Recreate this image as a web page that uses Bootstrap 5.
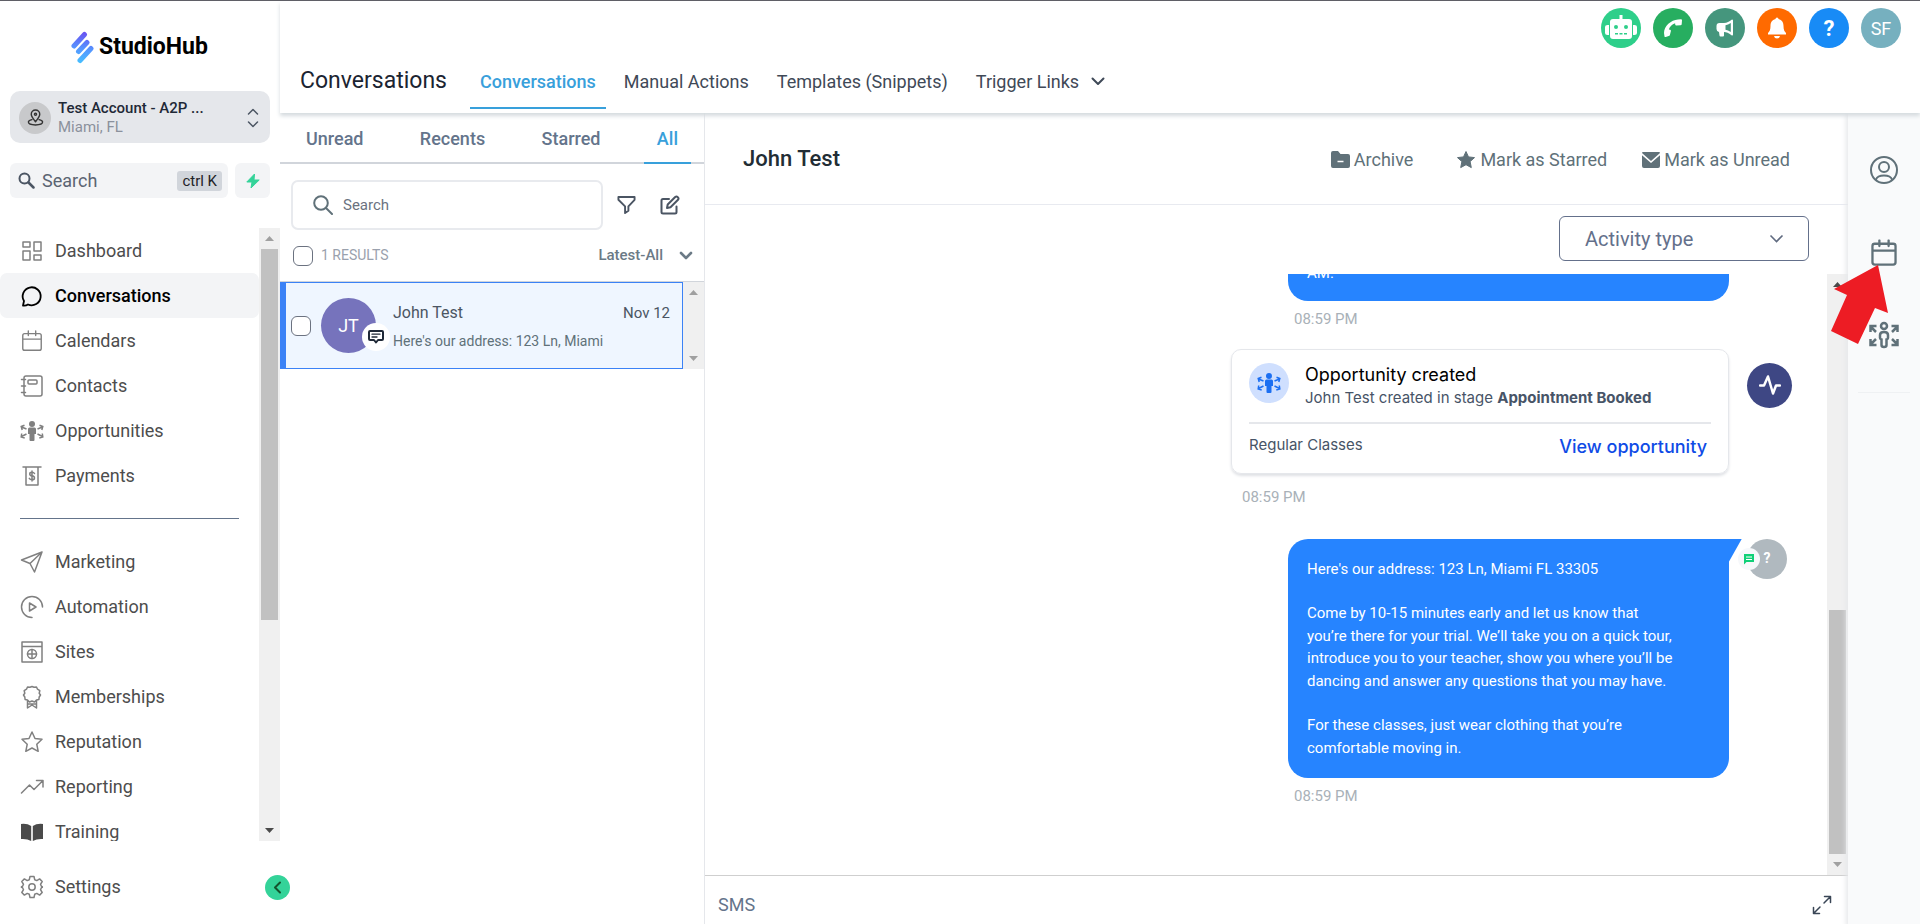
<!DOCTYPE html>
<html lang="en">
<head>
<meta charset="utf-8">
<meta name="viewport" content="width=device-width, initial-scale=1">
<title>StudioHub – Conversations</title>
<link href="https://cdn.jsdelivr.net/npm/bootstrap@5.3.0/dist/css/bootstrap.min.css" rel="stylesheet">
<style>
body{font-family:Roboto,"Liberation Sans",sans-serif;font-size:15px;color:#4b5563;background:#fff;border-top:1px solid #5f5f66}
button{color:inherit}
a{text-decoration:none}
svg{display:block;flex:none}
.ico{fill:none;stroke:currentColor;stroke-width:2;stroke-linecap:round;stroke-linejoin:round}
.thin{stroke-width:1.5}
.fs-18{font-size:18px}.fs-22{font-size:22px}.fs-14{font-size:14px}
.slate{color:#607179}
.plain{border:0;background:none;padding:0}
.round{border-radius:50%;display:flex;align-items:center;justify-content:center;flex:none;border:0;padding:0;color:#fff}

.side{width:280px;flex:none}
.brand-row{height:90px;padding:2px 0 0 71px;gap:5px}
.brand-name{font-size:23px;font-weight:700;color:#000;line-height:28px}
.account{margin:0 10px;height:52px;border-radius:10px;background:#e5e7eb;padding:1px 10px 0 9px;gap:7px;line-height:19px}
.account .round{width:32px;height:32px;background:#c8c9cb;color:#333}
.account-name{color:#1f2937;font-weight:500}
.account-place{color:#8b919c}
.quick{margin:20px 10px 30px;gap:7px}
.quick label{height:35px;background:#f3f4f6;border-radius:6px;padding:0 6px 0 8px;gap:7px;min-width:0}
.quick input,.inbox-search input{border:0;outline:0;background:none;min-width:0;padding:0;color:#4b5563}
.quick input::placeholder{color:#5b6472;opacity:1}
.keys{font:inherit;font-size:15px;background:#d1d5db;border-radius:3px;color:#1f2328;line-height:20px;padding:0 5px;flex:none}
.bolt{width:35px;height:35px;border-radius:6px;background:#f3f4f6;display:flex;align-items:center;justify-content:center;flex:none}

.menu{overflow:hidden;min-height:0}
.menu-item{height:45px;padding-left:20px;gap:11px;color:#4d4d4d;font-size:18px;flex:none;border-radius:7px}
.menu-item svg{color:#808080}
.menu-item.active{background:#f3f4f6;color:#000;font-weight:500}
.menu-item.active svg{color:#000}
.menu-rule{margin:20px 20px;border:0;border-top:1px solid #64748b;opacity:1;flex:none}
.track{width:21px;flex:none;background:#f0f0f0;display:flex;flex-direction:column;align-items:center}
.track svg{height:21px;width:9px}
.thumb{width:17px;background:#c1c1c1}
.footer-row{height:84px;padding-top:23px}
.collapse-btn{width:25px;height:25px;background:#34d399;color:#14532d;position:absolute;right:-10px;top:34px;z-index:5}

.topbar{height:112px;flex:none;box-shadow:0 3px 4px #d5dbdf;position:relative;z-index:2;background:#fff;padding:0 19px 0 20px}
.page-title{color:#1b2431;font-size:23px;font-weight:400;line-height:30px;margin:0 23px 0 0;padding-bottom:17px}
.tab{display:flex;align-items:center;gap:12px;padding:0 10px 3px;font-size:18px;color:#3f4957;height:50px;border-bottom:2px solid transparent}
.tab.active{color:#38a0db;border-color:#38a0db;font-weight:500}
.bubbles{gap:12px;padding-top:7px}
.bubbles .round{width:40px;height:40px}

.inbox{width:425px;flex:none;border-right:1px solid #e5e7eb}
.filters{height:51px;padding:0 13px;border-bottom:2px solid #d1d5db}
.filters button{padding:1px 13px 0;font-size:18px;font-weight:500;color:#64748b;height:51px;border-bottom:2px solid transparent}
.filters button.active{color:#38a0db;border-color:#38a0db}
.inbox-tools{padding:16px 24px 0 11px}
.inbox-search{height:50px;border:2px solid #e8eaee;border-radius:7px;padding:0 20px;gap:10px;margin-right:14px}
.inbox-search input::placeholder{color:#6b7280;opacity:1}
.inbox-meta{height:51px;padding:0 11px 0 13px}
.tick{appearance:none;width:20px;height:20px;border:1px solid #6b7280;border-radius:6px;background:#fff;margin:0;flex:none}
.sorter{color:#6b7a86;font-weight:500}
.thread-list{border-top:1px solid #d1d5db}
.thread{height:87px;background:#eff6ff;border:1px solid #3b82f6;border-left-width:6px;padding:0 12px 0 5px}
.avatar-jt{width:55px;height:55px;background:#7673bc;font-size:18px;position:relative;margin:0 17px 0 10px}
.chan{position:absolute;width:28px;height:28px;right:-14px;bottom:2px;background:#fff;color:#1f2937}
.thread-text{line-height:20px;padding-top:2px}

.chat-head{height:92px;border-bottom:1px solid #e8eaf0;padding:2px 58px 0 38px;flex:none}
.chat-actions{gap:35px}
.activity{width:250px;height:45px;border:1px solid #64708b;border-radius:6px;padding:0 24px 0 25px;font-size:20px;color:#64708b;
 appearance:none;background:#fff url("data:image/svg+xml,%3Csvg xmlns='http://www.w3.org/2000/svg' width='15' height='10' fill='none' stroke='%23606b80' stroke-width='1.6'%3E%3Cpath d='M1.500 1.500l6 6 6-6'/%3E%3C/svg%3E") no-repeat right 24px center}
.chat-filter{padding:11px 39px 13px;flex:none}
.stream{overflow:hidden;min-height:0;display:flex;flex-direction:column;justify-content:flex-end;align-items:flex-end;padding:0 35px 69px 0}
.entry{flex:none;display:flex;gap:18px;width:561px;justify-content:flex-end}
.entry-mark{width:45px;flex:none}
.bubble{width:441px;background:#2684ff;color:#fff;border-radius:20px;padding:19px;line-height:1.5;position:relative}
.bubble p{margin:0 0 22px;max-width:370px}
.bubble p:last-child{margin:0}
.tailed{border-top-right-radius:0}
.tail{position:absolute;left:100%;top:0;width:13px;height:23px;background:#2684ff;clip-path:polygon(0 0,100% 0,0 100%)}
.stamp{color:#a9b1b8;line-height:20px;flex:none}
.stamp-msg{width:498px;padding:8px 0 0 0}
.stamp-note{width:550px;padding:13px 0 32px}
.note{width:498px;border:1px solid #e5e7eb;border-radius:10px;box-shadow:0 2px 3px #dfe1e5;font-family:Inter,"Liberation Sans",sans-serif;padding:13px 17px;height:125px}
.note-icon{width:40px;height:40px;background:#cfdffe;color:#1b6ff2}
.note-title{color:#000;font-size:18px;line-height:24px}
.note-sub{font-size:15px;line-height:22px;color:#475467}
.note hr{margin:13px 0 10px;border:0;border-top:2px solid #e5e7eb;opacity:1}
.note a{color:#0f4be6;font-size:18px;font-weight:500;line-height:26px}
.pulse{width:45px;height:45px;background:#3e4784;margin-top:14px}
.who{width:40px;height:40px;background:#b0b9bf;font-weight:700;font-size:14px;position:relative}
.who .round{position:absolute;left:-9px;top:9px;width:22px;height:22px;background:#f6f8fb}
.composer{border-top:1px solid #cfcfcf;height:50px;padding:8px 16px 0 13px;flex:none;color:#64748b}

.rail{width:72px;flex:none;background:#f9fafb;box-shadow:0 0 5px 2px #e6e7ea;z-index:1;padding-top:42px;position:relative;color:#607179}
.rail button{margin-bottom:53px}
.rail hr{width:52px;margin:-10px 0 0;border-color:#d5d8dc}
.pointer{position:absolute;left:-17px;top:152px}
</style>
</head>
<body class="vh-100 d-flex overflow-hidden">

<svg class="d-none">
 <symbol id="people" viewBox="0 0 24 20"><circle cx="12" cy="3" r="3" fill="currentColor"/><path fill="currentColor" d="M8 8q0-1.500 1.500-1.500h5q1.500 0 1.500 1.500v5h-1.500v6q0 1-1 1h-3q-1 0-1-1v-6H8z"/><path fill="none" stroke="currentColor" stroke-width="1.500" d="M6.500 8 1.500 6M4.500 4.200 1.200 5.500l1 3.500M6.500 13l-5 2.500M1.700 12.500 1.200 16l3.500 1M17.500 8l5-2M19.500 4.200l3.300 1.300-1 3.500M17.500 13l5 2.500M22.300 12.500l.5 3.500-3.500 1"/></symbol>
 <symbol id="cal" viewBox="0 0 24 24"><path d="M4 4h16q2 0 2 2v14q0 2-2 2H4q-2 0-2-2V6q0-2 2-2zM2 10h20M8 1v5M16 1v5"/></symbol>
 <symbol id="up" viewBox="0 0 9 21"><path d="M0 13 4.500 8 9 13z"/></symbol>
 <symbol id="down" viewBox="0 0 9 21"><path d="M0 8 4.500 13 9 8z"/></symbol>
</svg>

<aside class="side d-flex flex-column vh-100">
 <div class="brand-row d-flex align-items-center flex-shrink-0">
  <svg width="23" height="33" viewBox="0 0 23 33" fill="none" stroke-linecap="round" stroke-width="5"><defs><linearGradient id="lg" gradientUnits="userSpaceOnUse" x1="14" y1="0" x2="10" y2="33"><stop stop-color="#6a4cf0"/><stop offset=".55" stop-color="#5596ff"/><stop offset="1" stop-color="#45c2ff"/></linearGradient></defs><path stroke="url(#lg)" d="M13.500 3.500 3 15M16 11.500 7.500 20.500M20 17.500 9 29.500"/></svg>
  <span class="brand-name">StudioHub</span>
 </div>
 <button class="plain account d-flex align-items-center text-start flex-shrink-0">
  <span class="round"><svg class="ico" width="17" height="17" viewBox="0 0 24 24"><path d="M12 18C8 13 6 10.500 6 7.500a6 6 0 0 1 12 0C18 10.500 16 13 12 18zM7 15c-3 .5-5 1.600-5 3.500C2 21 7 22.500 12 22.500S22 21 22 18.500c0-1.900-2-3-5-3.500"/><circle cx="12" cy="7.500" r="1.500"/></svg></span>
  <span class="flex-grow-1"><span class="d-block account-name">Test Account - A2P ...</span><span class="d-block account-place">Miami, FL</span></span>
  <svg class="ico thin" width="14" height="20" viewBox="0 0 14 20"><path d="M2.500 6 7 1.500 11.500 6M2.500 14 7 18.500 11.500 14"/></svg>
 </button>
 <div class="quick d-flex">
  <label class="d-flex align-items-center flex-grow-1 fs-18">
   <svg class="ico" width="17" height="17" viewBox="0 0 17 17"><circle cx="6.500" cy="6.500" r="5"/><path stroke-width="2.500" d="m10.500 10.500 5 5"/></svg>
   <input class="flex-grow-1 w-50" placeholder="Search" aria-label="Search">
   <kbd class="keys">ctrl K</kbd>
  </label>
  <button class="plain bolt" aria-label="Quick actions"><svg width="14" height="16" viewBox="0 0 14 16"><path fill="#34d399" stroke="#34d399" stroke-linejoin="round" d="M8.500 1 .8 9H6l-1 6L13.200 7H8z"/></svg></button>
 </div>

 <div class="d-flex flex-grow-1 menu">
  <nav class="menu d-flex flex-column flex-grow-1" aria-label="Main">
   <a href="#" class="menu-item d-flex align-items-center"><svg class="ico thin" width="24" height="24" viewBox="0 0 24 24"><path d="M3 3h7v5H3zM14 3h7v9h-7zM3 12h7v9H3zM14 16h7v5h-7z"/></svg>Dashboard</a>
   <a href="#" class="menu-item active d-flex align-items-center"><svg class="ico" width="24" height="24" viewBox="0 0 24 24"><path stroke-width="1.800" d="M3 21.500l1-4.500A9 9 0 1 1 8 20.500C6.500 21.500 4.500 21.700 3 21.500z"/></svg>Conversations</a>
   <a href="#" class="menu-item d-flex align-items-center"><svg class="ico thin" width="24" height="24" viewBox="-1 -1 26 26"><use href="#cal" width="24" height="24"/></svg>Calendars</a>
   <a href="#" class="menu-item d-flex align-items-center"><svg class="ico thin" width="24" height="24" viewBox="0 0 24 24"><path d="M6 2h14q2 0 2 2v16q0 2-2 2H6q-2 0-2-2V4q0-2 2-2zM1.500 5.500h4M1.500 12h4M1.500 18.500h4M9 6h7q1 0 1 1v2q0 1-1 1H9q-1 0-1-1V7q0-1 1-1z"/></svg>Contacts</a>
   <a href="#" class="menu-item d-flex align-items-center"><svg width="24" height="20"><use href="#people"/></svg>Opportunities</a>
   <a href="#" class="menu-item d-flex align-items-center"><svg class="ico thin" width="24" height="24" viewBox="0 0 24 24"><path d="M3 3h18M6 3v18h12V3M14.500 9.500c-.5-1-1.500-1.300-2.500-1.300-3 0-3 3.300 0 3.600 3.300.4 3.300 4 0 4-1.200 0-2.200-.5-2.700-1.400M12 7v10"/></svg>Payments</a>
   <hr class="menu-rule">
   <a href="#" class="menu-item d-flex align-items-center"><svg class="ico thin" width="24" height="24" viewBox="0 0 24 24"><path d="M22 2 1.500 10 10 13.500 14.500 22zM22 2 10 13.500"/></svg>Marketing</a>
   <a href="#" class="menu-item d-flex align-items-center"><svg class="ico thin" width="24" height="24" viewBox="0 0 24 24"><path d="M12 22.500A10.500 10.500 0 1 1 22.500 12M9.500 8l6.500 4-6.500 4z"/></svg>Automation</a>
   <a href="#" class="menu-item d-flex align-items-center"><svg class="ico thin" width="24" height="24" viewBox="0 0 24 24"><path d="M2 2h20v20H2zM2 6.500h20"/><circle cx="12" cy="14" r="4.500"/><path d="M12 9.500v9M7.500 14h9"/></svg>Sites</a>
   <a href="#" class="menu-item d-flex align-items-center"><svg class="ico thin" width="24" height="24" viewBox="0 0 24 24"><path d="M12 1.500l2 .8 2.500-.3 1 2.200 2.300 1.500-.6 2.500L20.500 10l-1.300 2-.3 2.500-2.400.4L14.500 17 12 16l-2.500 1-2-2.100-2.400-.4-.3-2.500L3.500 10l1.300-1.800-.6-2.500 2.300-1.500 1-2.200 2.500.3zM7.500 15.500V23l4.500-3 4.500 3v-7.500M8 19h8"/></svg>Memberships</a>
   <a href="#" class="menu-item d-flex align-items-center"><svg class="ico thin" width="24" height="24" viewBox="0 0 24 24"><path d="m12 2 3 6.500 7 .8-5.200 5 1.400 7L12 18l-6.200 3.300 1.400-7-5.200-5 7-.8z"/></svg>Reputation</a>
   <a href="#" class="menu-item d-flex align-items-center"><svg class="ico thin" width="24" height="24" viewBox="0 0 24 24"><path d="m1.500 18 8-8 4.500 4.500 9-9M16.500 5.500H23V12"/></svg>Reporting</a>
   <a href="#" class="menu-item d-flex align-items-center"><svg width="24" height="24" viewBox="0 0 24 24" fill="#4a4a4a"><path d="M1 4q6-.8 10.200 2v15Q7 18.500 1 19zM23 4q-6-.8-10.200 2v15Q17 18.500 23 19z"/></svg>Training</a>
  </nav>
  <div class="track"><svg fill="#a0a0a0"><use href="#up"/></svg><div class="thumb" style="height:371px"></div><svg class="mt-auto" fill="#4a4a4a"><use href="#down"/></svg></div>
 </div>
 <div class="footer-row position-relative flex-shrink-0">
  <a href="#" class="menu-item d-flex align-items-center"><svg class="ico thin" width="24" height="24" viewBox="0 0 24 24"><path d="M10 1.500h4l.7 3.200 2.100.9 2.800-1.700 2.600 2.600-1.700 2.800.9 2 .9.300v.8l-.9.300-.9 2 1.700 2.800-2.600 2.600-2.800-1.700-2.100.9-.7 3.200h-4l-.7-3.200-2.100-.9-2.800 1.700-2.600-2.600 1.700-2.800-.9-2-1.100-.3v-.8l1.100-.3.9-2-1.700-2.800L4.400 3.900l2.800 1.700 2.100-.9z"/><circle cx="12" cy="12" r="3.200"/></svg>Settings</a>
  <button class="round collapse-btn" aria-label="Collapse"><svg class="ico" width="9" height="13" viewBox="0 0 9 13"><path d="M7 1.500 2 6.500l5 5"/></svg></button>
 </div>
</aside>

<div class="flex-grow-1 d-flex flex-column vh-100" style="min-width:0">
 <header class="topbar d-flex justify-content-between">
  <div class="d-flex align-items-end">
   <h1 class="page-title">Conversations</h1>
   <nav class="d-flex gap-2 pb-1" aria-label="Conversations">
    <a href="#" class="tab active">Conversations</a><a href="#" class="tab">Manual Actions</a><a href="#" class="tab">Templates (Snippets)</a><a href="#" class="tab">Trigger Links <svg class="ico" width="14" height="9" viewBox="0 0 14 9"><path d="m1.500 1.500 5.500 5.500 5.500-5.500"/></svg></a>
   </nav>
  </div>
  <div class="bubbles d-flex">
   <button class="round" style="background:#2ecf8a" aria-label="Assistant"><svg width="34" height="28" viewBox="0 0 34 28"><path fill="#fff" d="M15.500 1h3v4H25q3 0 3 3v14q0 3-3 3H9q-3 0-3-3V8q0-3 3-3h6.500zM1 13q0-2 2.500-2H5v10H3.500Q1 21 1 19zM33 13q0-2-2.500-2H29v10h1.500q2.500 0 2.500-2z"/><g fill="#2ecf8a"><circle cx="12" cy="13" r="2"/><circle cx="22" cy="13" r="2"/><path d="M11 19h3v1.500h-3zM15.500 19h3v1.500h-3zM20 19h3v1.500h-3z"/></g></svg></button>
   <button class="round" style="background:#27ae60" aria-label="Phone"><svg width="20" height="20" viewBox="0 0 20 20"><path fill="#fff" d="M1.500 18.500 1 15C1 8 8 2 15 1.500l3-.2q1 0 1 1l-.3 4q-.1 1-1.200 1l-4.200.2q-1 0-1.100-1l-.1-1.200C9 6.500 6.700 8.700 5.800 11.500l1.400.3q.9.200.7 1.200l-1 4q-.3 1-1.200 1.100l-3 .9q-1 .2-1.200-.5z"/></svg></button>
   <button class="round" style="background:#45967d" aria-label="Announcements"><svg width="20" height="20" viewBox="0 0 20 20"><path fill="#fff" d="M17 1.500q1 0 1 1v14q0 1.500-1.500.8C13.500 15 11.500 14 9 14v3.500q0 1-1 1H5.500q-1 0-1-1L4 14q-2.500-.3-2.500-3V8q0-3 3-3H9c3 0 5-1.500 8-3.500z"/><path fill="#45967d" d="M10.500 7.200Q13 6.700 15.800 5v9q-2.800-1.700-5.300-2.200z"/></svg></button>
   <button class="round" style="background:#ff6a00" aria-label="Notifications"><svg width="20" height="22" viewBox="0 0 20 22"><path fill="#fff" d="M10 .5q1.500 0 1.500 1.500c3.500.8 5 3.500 5 7 0 4 1 5.500 2.500 7v1.500H1V16c1.500-1.500 2.500-3 2.500-7 0-3.500 1.500-6.200 5-7Q8.500.5 10 .5zM7 19h6q-.5 2.500-3 2.500T7 19z"/></svg></button>
   <button class="round fs-22 fw-bold" style="background:#188bf6" aria-label="Help">?</button>
   <button class="round fs-18" style="background:#76b0bf">SF</button>
  </div>
 </header>

 <div class="d-flex flex-grow-1" style="min-height:0">
  <section class="inbox d-flex flex-column">
   <div class="filters d-flex justify-content-between"><button class="plain">Unread</button><button class="plain">Recents</button><button class="plain">Starred</button><button class="plain active">All</button></div>
   <div class="inbox-tools d-flex align-items-center">
    <label class="inbox-search d-flex align-items-center flex-grow-1"><svg class="ico slate" width="20" height="20" viewBox="0 0 20 20"><circle cx="8" cy="8" r="6.800"/><path d="m13 13 6 6"/></svg><input class="flex-grow-1" placeholder="Search" aria-label="Search conversations"></label>
    <button class="plain me-4" aria-label="Filter"><svg class="ico" width="19" height="20" viewBox="0 0 20 20"><path d="M1.500 1.500h17v3L12 11.500V16l-3.500 2.500v-7l-7-7z"/></svg></button>
    <button class="plain" aria-label="Compose"><svg class="ico" width="20" height="20" viewBox="0 0 20 20"><path d="M9 4H3Q1.500 4 1.500 5.500V17q0 1.500 1.500 1.500h12q1.500 0 1.500-1.500v-5.500M7 13l.7-3.500 7.500-7.500q1.300-1 2.600.2t.2 2.600L10.500 12.300z"/></svg></button>
   </div>
   <div class="inbox-meta d-flex align-items-center">
    <input type="checkbox" class="tick" id="all"><label for="all" class="fs-14 ms-2" style="color:#9aa1ad">1 RESULTS</label>
    <button class="plain ms-auto d-flex align-items-center gap-3 sorter">Latest-All <svg class="ico" width="14" height="9" viewBox="0 0 14 9" style="stroke-width:2.600"><path d="m2 2 5 5 5-5"/></svg></button>
   </div>
   <div class="thread-list d-flex">
    <article class="thread d-flex align-items-center flex-grow-1">
     <input type="checkbox" class="tick" aria-label="Select John Test">
     <div class="round avatar-jt">JT<span class="round chan"><svg class="ico" width="16" height="14" viewBox="0 0 16 14"><path stroke-width="2" d="M2 1h12q1 0 1 1v7q0 1-1 1h-4l-2 2.500L6 10H2q-1 0-1-1V2q0-1 1-1z"/><path stroke-width="1.300" d="M4 4.200h8M4 7h5"/></svg></span></div>
     <div class="thread-text flex-grow-1">
      <div class="d-flex justify-content-between mb-2"><span style="font-size:16px">John Test</span><span>Nov 12</span></div>
      <div class="fs-14 slate">Here's our address: 123 Ln, Miami</div>
     </div>
    </article>
    <div class="track"><svg fill="#a0a0a0"><use href="#up"/></svg><svg class="mt-auto" fill="#a0a0a0"><use href="#down"/></svg></div>
   </div>
  </section>

  <main class="flex-grow-1 d-flex flex-column" style="min-width:0">
   <div class="chat-head d-flex align-items-center justify-content-between">
    <h2 class="fs-22 mb-0" style="font-weight:500;color:#222d35">John Test</h2>
    <div class="chat-actions d-flex fs-18 slate">
     <button class="plain d-flex align-items-center gap-1 me-2"><svg width="19" height="18" viewBox="0 0 19 18"><path fill="currentColor" d="M2 0h5l2.500 3H17q2 0 2 2v10q0 2-2 2H2q-2 0-2-2V2q0-2 2-2z"/><path stroke="#fff" stroke-width="1.500" d="M6.500 10.500h6"/></svg>Archive</button>
     <button class="plain d-flex align-items-center gap-1"><svg width="20" height="20" viewBox="0 0 20 20"><path fill="currentColor" stroke="currentColor" stroke-linejoin="round" d="m10 1.500 2.500 5.400 6 .7-4.400 4 1.200 6L10 14.700l-5.300 2.900 1.200-6-4.400-4 6-.7z"/></svg>Mark as Starred</button>
     <button class="plain d-flex align-items-center gap-1"><svg width="18" height="16" viewBox="0 0 18 16"><path fill="currentColor" d="M1 0h16q1 0 1 1L9 9 0 1q0-1 1-1zM0 3.300l9 7.700 9-7.700V14q0 2-2 2H2q-2 0-2-2z"/></svg>Mark as Unread</button>
    </div>
   </div>
   <div class="chat-filter d-flex justify-content-end"><select class="activity" aria-label="Activity type"><option>Activity type</option></select></div>
   <div class="d-flex flex-grow-1" style="min-height:0">
    <div class="stream flex-grow-1">
     <div class="entry"><div class="bubble pb-3"><p>AM.</p></div><div class="entry-mark"></div></div>
     <div class="stamp stamp-msg">08:59 PM</div>
     <div class="entry mt-3 pt-1"><div class="note">
       <div class="d-flex gap-3"><span class="round note-icon"><svg width="26" height="20"><use href="#people"/></svg></span><div><div class="note-title">Opportunity created</div><div class="note-sub">John Test created in stage <b>Appointment Booked</b></div></div></div>
       <hr><div class="d-flex justify-content-between"><span class="note-sub">Regular Classes</span><a href="#" class="me-1">View opportunity</a></div>
      </div><div class="entry-mark"><span class="round pulse"><svg class="ico" width="22" height="20" viewBox="0 0 22 20"><path stroke-width="2.500" d="M1 10.500h4L9 1.500l5 17 3-8h4"/></svg></span></div></div>
     <div class="stamp stamp-note">08:59 PM</div>
     <div class="entry"><div class="bubble tailed"><span class="tail"></span><p>Here's our address: 123 Ln, Miami FL 33305</p><p>Come by 10-15 minutes early and let us know that you’re there for your trial. We’ll take you on a quick tour, introduce you to your teacher, show you where you’ll be dancing and answer any questions that you may have.</p><p>For these classes, just wear clothing that you’re comfortable moving in.</p></div><div class="entry-mark"><span class="round who">?<span class="round"><svg width="12" height="12" viewBox="0 0 12 12"><path fill="#10d078" d="M1 1h10v8H3.500L1 11.500z"/><path stroke="#fff" d="M3 4h6M3 6.500h6"/></svg></span></span></div></div>
     <div class="stamp stamp-msg">08:59 PM</div>
    </div>
    <div class="track"><svg fill="#4a4a4a"><use href="#up"/></svg><div class="thumb mt-auto" style="height:244px"></div><svg fill="#a0a0a0"><use href="#down"/></svg></div>
   </div>
   <div class="composer d-flex align-items-center justify-content-between fs-18"><span>SMS</span><button class="plain" aria-label="Expand"><svg class="ico thin" width="20" height="20" viewBox="0 0 20 20" style="color:#3a4656"><path d="m12 8 6.500-6.500M12.500 1.500h6v6M8 12l-6.500 6.500M1.500 12.500v6h6"/></svg></button></div>
  </main>

  <aside class="rail d-flex flex-column align-items-center">
   <button class="plain" aria-label="Contact"><svg class="ico" width="30" height="30" viewBox="0 0 30 30"><circle cx="15" cy="15" r="13"/><circle cx="15" cy="12" r="5"/><path d="M7 24.500c1-3 3-4 8-4s7 1 8 4"/></svg></button>
   <button class="plain" aria-label="Appointments"><svg class="ico" width="30" height="30" viewBox="-1 -1 26 26"><use href="#cal" width="24" height="24"/></svg></button>
   <button class="plain" aria-label="Opportunities"><svg class="ico" width="32" height="28" viewBox="0 0 32 28" style="stroke-linejoin:miter;stroke-linecap:butt;stroke-width:2.500"><circle cx="16" cy="5" r="3"/><path d="M12 14q0-3 4-3t4 3v3q0 1-1.500 1.500V24q0 2-2.500 2t-2.500-2v-5.500Q12 18 12 17z"/><path d="m8 11-5-5M8.500 5H2.500v6M24 11l5-5M23.500 5h6v6M8 18l-5 5M8.500 24H2.500v-6M24 18l5 5M23.500 24h6v-6"/></svg></button>
   <hr>
   <svg class="pointer" width="58" height="80" viewBox="0 0 58 80"><path fill="#ed1c24" d="M47 0 57 48 44 43 27 79 0 66 16 30 3 24z"/></svg>
  </aside>
 </div>
</div>

<script src="https://cdn.jsdelivr.net/npm/bootstrap@5.3.0/dist/js/bootstrap.bundle.min.js"></script>
</body>
</html>
